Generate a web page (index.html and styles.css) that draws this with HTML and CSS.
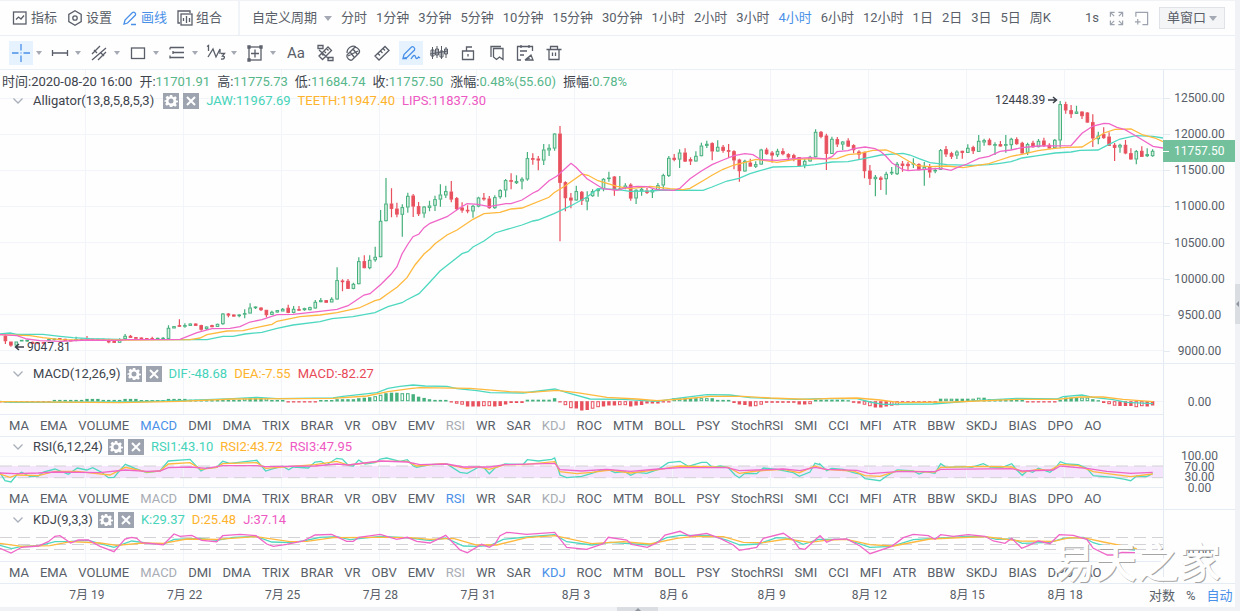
FILE: index.html
```html
<!DOCTYPE html>
<html lang="zh-CN">
<head>
<meta charset="utf-8">
<title>BTC 4小时</title>
<link rel="stylesheet" href="styles.css">
</head>
<body>
<svg class="defs" aria-hidden="true">
  <symbol id="gear" viewBox="0 0 16 16"><path fill="#fff" fill-rule="evenodd" d="M6.8 2h2.4l.4 1.8 1 .4 1.600-1 1.600 1.600-1 1.600.4 1 1.800.4v1.400l-1.800.4-.4 1 1 1.600-1.600 1.600-1.600-1-1 .4L9.200 14H6.800l-.4-1.800-1-.4-1.600 1-1.600-1.600 1-1.600-.4-1L1.500 9V7.500l1.700-.5.4-1-1-1.600 1.600-1.600 1.600 1 1-.4zM8 5.500a2.500 2.500 0 1 0 0 5 2.500 2.500 0 0 0 0-5z"/></symbol>
  <symbol id="close" viewBox="0 0 16 16"><path stroke="#fff" stroke-width="2" d="M4 4l8 8M12 4l-8 8"/></symbol>
  <symbol id="chevron" viewBox="0 0 10 6"><path fill="none" stroke="#a9afba" stroke-width="1.300" d="M.5.5L5 5 9.500.5"/></symbol>
</svg>
<div class="app">
  <header class="bar top">
    <div class="features">
      <button><svg viewBox="0 0 16 16"><rect x="1.500" y="2" width="12.500" height="12"/><path d="M4 9.500l2.500-2.500 2.500 2 3-3.500"/></svg>指标</button>
      <button><svg viewBox="0 0 16 16"><path d="M8 .8l6.200 3.600v7.200L8 15.200l-6.200-3.600V4.400z"/><circle cx="8" cy="8" r="2.200"/></svg>设置</button>
      <button class="on"><svg viewBox="0 0 16 16"><path d="M2 14l1-4 7.500-7.500c1.500-1.200 4 1 2.800 2.800L5.500 13zM9 14.500h5"/></svg>画线</button>
      <button><svg viewBox="0 0 16 16"><path d="M3 13H1V1h12v2"/><rect x="4" y="4" width="11" height="11"/><path d="M6.500 8v3M9.500 6v7M12.500 8v4"/></svg>组合</button>
    </div>
    <nav class="periods">
      <button class="custom">自定义周期<i class="caret"></i></button>
      <button>分时</button><button>1分钟</button><button>3分钟</button><button>5分钟</button><button>10分钟</button><button>15分钟</button><button>30分钟</button><button>1小时</button><button>2小时</button><button>3小时</button><button class="on">4小时</button><button>6小时</button><button>12小时</button><button>1日</button><button>2日</button><button>3日</button><button>5日</button><button>周K</button>
    </nav>
    <div class="window-tools">
      <button>1s</button>
      <button aria-label="全屏"><svg class="pale" viewBox="0 0 16 16"><path d="M1.500 6V1.500H6M1.500 1.500l4 4M10 1.500h4.500V6M14.500 1.500l-4 4M1.500 10v4.500H6M1.500 14.500l4-4M10 14.500h4.500V10M14.500 14.500l-4-4"/></svg></button>
      <button aria-label="新窗口"><svg class="pale" viewBox="0 0 16 16"><path d="M2 6V1.500h12.500v13H9M1 11.500h6M4 8.500v6"/></svg></button>
      <label class="picker"><select aria-label="窗口布局"><option>单窗口</option><option>双窗口</option></select><i class="caret"></i></label>
    </div>
  </header>
  <div class="bar draw">
    <div class="menus">
      <button aria-label="十字光标"><span class="tool on"><svg viewBox="0 0 20 20"><path d="M10 1v6.500M10 12.500V19M1 10h6.500M12.500 10H19M10 9.500v1"/></svg></span><i class="caret"></i></button>
      <button aria-label="线段"><span class="tool"><svg viewBox="0 0 20 20"><path d="M2.500 7v6M17.500 7v6M2.500 10h15"/></svg></span><i class="caret"></i></button>
      <button aria-label="通道"><span class="tool"><svg viewBox="0 0 20 20"><path d="M3 11L11 3M3 17L17 5M9 17l8-8M5 7l3 3M12 10l3 3"/></svg></span><i class="caret"></i></button>
      <button aria-label="矩形"><span class="tool"><svg viewBox="0 0 20 20"><rect x="3.500" y="5" width="13" height="10.500"/></svg></span><i class="caret"></i></button>
      <button aria-label="斐波那契"><span class="tool"><svg viewBox="0 0 20 20"><path d="M3 4.500h14M6 9.500h11M3 14.500h14M3 4.500v2M6 8v3M3 12.500v3"/></svg></span><i class="caret"></i></button>
      <button aria-label="波浪"><span class="tool"><svg viewBox="0 0 20 20"><path d="M1 3.500L2.500 2.500V8M2 14L7 6l3 8 4-8v5"/><path d="M15 10.500h3.500L16.500 13c3 0 2.500 3.500-1.500 3"/></svg></span><i class="caret"></i></button>
      <button aria-label="测量"><span class="tool"><svg viewBox="0 0 20 20"><rect x="4" y="4" width="12" height="13"/><path d="M10 6.500v8M6 10.500h8"/><path d="M3 3h2v2H3zM15 3h2v2h-2zM3 16h2v2H3z"/></svg></span><i class="caret"></i></button>
    </div>
    <div class="tools">
      <button class="tool text">Aa</button>
      <button class="tool" aria-label="标尺一"><svg viewBox="0 0 20 20"><path d="M3 2.500h5v3H3zM13 14.500h5v3h-5zM4 13l9-9 3.500 3.500-9 9zM6.500 10.500l2 2M9 8l2 2M11.500 5.500l2 2M4 7l10 9"/></svg></button>
      <button class="tool" aria-label="橡皮"><svg viewBox="0 0 20 20"><path d="M4 12l7-7c2-2 7 2 5 5l-7 7c-2 1-6-2-5-5zM7 9l4 5M10 6l4 5M5 13l10-5M4 10c0-6 6-8 9-6"/></svg></button>
      <button class="tool" aria-label="尺"><svg viewBox="0 0 20 20"><path d="M3 13L13 3.500 17 7.500 7 17zM6 10.500l2 2M8.500 8l2 2M11 5.500l2 2"/></svg></button>
      <button class="tool on" aria-label="画笔"><svg viewBox="0 0 20 20"><path d="M2 15.500l1-4L10.500 4c1.500-1 4 1 3 3L6 14.500zM2 15.500h4M10 16c3-5 4-4 4.500-2s2 2 3 0l1.500 1"/></svg></button>
      <button class="tool" aria-label="K线形态"><svg class="thin" viewBox="0 0 20 20"><path d="M3.500 4v12M8 3v12M12.500 3v13M17 4v11M2 7h3v6H2zM6.500 6h3v6h-3zM11 8h3v6h-3zM15.500 6h3v5h-3zM1 11L19 8"/></svg></button>
      <button class="tool" aria-label="锁定"><svg viewBox="0 0 20 20"><path d="M4.500 8h11v8.500h-11zM8.500 8V4h5.500M10 11v2.500"/></svg></button>
      <button class="tool" aria-label="书签"><svg viewBox="0 0 20 20"><path d="M6.500 5.500H16v11l-3.500-2.500-3 2.500-3-2.500zM4 14V3.500h10"/></svg></button>
      <button class="tool" aria-label="编辑"><svg viewBox="0 0 20 20"><path d="M6 17H2.500V3.500h15V8M6 2v3M14 2v3M5 8h7M5 12h4M10 17l6-5 2 5h-8M12 16l3-1"/></svg></button>
      <button class="tool" aria-label="删除"><svg viewBox="0 0 20 20"><path d="M2.500 6.500h15M5 6.500V16.500h10V6.500M6.500 6V3.500h7V6M8.500 9.500V13M11.500 9.500V13"/></svg></button>
    </div>
  </div>
  <section class="pane main">
    <div class="plot">
      <svg id="price" class="chart" viewBox="0 70 1163 293" preserveAspectRatio="none"></svg>
      <div class="legend">
        <p class="quote"><span>时间:2020-08-20 16:00</span><span>开:<b>11701.91</b></span><span>高:<b>11775.73</b></span><span>低:<b>11684.74</b></span><span>收:<b>11757.50</b></span><span>涨幅:<b>0.48%(55.60)</b></span><span>振幅:<b>0.78%</b></span></p>
        <p class="study"><svg class="fold"><use href="#chevron"/></svg><span class="name">Alligator(13,8,5,8,5,3)</span><button aria-label="设置"><svg><use href="#gear"/></svg></button><button aria-label="关闭"><svg><use href="#close"/></svg></button><span class="teal">JAW:11967.69</span><span class="amber">TEETH:11947.40</span><span class="pink">LIPS:11837.30</span></p>
      </div>
      <span class="mark high">12448.39 <svg viewBox="0 0 10 8"><path d="M0 4h8M5 1l3.500 3L5 7"/></svg></span>
      <span class="mark low"><svg viewBox="0 0 10 8"><path d="M10 4H2M5 1L1.500 4 5 7"/></svg> 9047.81</span>
    </div>
    <div class="axis"><span>12500.00</span><span>12000.00</span><span>11500.00</span><span>11000.00</span><span>10500.00</span><span>10000.00</span><span>9500.00</span><span>9000.00</span><output class="tag">11757.50</output></div>
  </section>
  <section class="pane">
    <div class="body">
      <div class="plot">
        <svg id="macd" class="chart" viewBox="0 364 1163 50" preserveAspectRatio="none"></svg>
        <div class="legend"><p class="study"><svg class="fold"><use href="#chevron"/></svg><span class="name">MACD(12,26,9)</span><button aria-label="设置"><svg><use href="#gear"/></svg></button><button aria-label="关闭"><svg><use href="#close"/></svg></button><span class="teal">DIF:-48.68</span><span class="amber">DEA:-7.55</span><span class="red">MACD:-82.27</span></p></div>
      </div>
      <nav class="tabs" data-active="MACD" data-used="RSI KDJ"></nav>
    </div>
    <div class="axis single"><span>0.00</span></div>
  </section>
  <section class="pane">
    <div class="body">
      <div class="plot">
        <svg id="rsi" class="chart" viewBox="0 437 1163 50" preserveAspectRatio="none"></svg>
        <div class="legend"><p class="study"><svg class="fold"><use href="#chevron"/></svg><span class="name">RSI(6,12,24)</span><button aria-label="设置"><svg><use href="#gear"/></svg></button><button aria-label="关闭"><svg><use href="#close"/></svg></button><span class="teal">RSI1:43.10</span><span class="amber">RSI2:43.72</span><span class="pink">RSI3:47.95</span></p></div>
      </div>
      <nav class="tabs" data-active="RSI" data-used="MACD KDJ"></nav>
    </div>
    <div class="axis dense"><span>100.00</span><span>70.00</span><span>30.00</span><span>0.00</span></div>
  </section>
  <section class="pane">
    <div class="body">
      <div class="plot tall">
        <svg id="kdj" class="chart" viewBox="0 510 1163 51" preserveAspectRatio="none"></svg>
        <div class="legend"><p class="study"><svg class="fold"><use href="#chevron"/></svg><span class="name">KDJ(9,3,3)</span><button aria-label="设置"><svg><use href="#gear"/></svg></button><button aria-label="关闭"><svg><use href="#close"/></svg></button><span class="teal">K:29.37</span><span class="amber">D:25.48</span><span class="pink">J:37.14</span></p></div>
      </div>
      <nav class="tabs" data-active="KDJ" data-used="MACD RSI"></nav>
    </div>
    <div class="axis single last"><span>0.00</span></div>
  </section>
  <footer class="time">
    <div class="dates"><span>7月 19</span><span>7月 22</span><span>7月 25</span><span>7月 28</span><span>7月 31</span><span>8月 3</span><span>8月 6</span><span>8月 9</span><span>8月 12</span><span>8月 15</span><span>8月 18</span></div>
    <div class="scale"><button>对数</button><button>%</button><button class="on">自动</button></div>
  </footer>
  <div class="watermark">易天之家</div>
  <button class="handle side" aria-label="展开侧栏"></button>
  <button class="handle bottom" aria-label="展开底栏"></button>
</div>
<script src="app.js"></script>
</body>
</html>
```

FILE: styles.css
```css
* { box-sizing: border-box; }
body {
  margin: 0;
  background: #f0f2f6;
  color: #595e69;
  font: 13px/16px Roboto, "Noto Sans CJK SC", sans-serif;
}
button {
  border: 0;
  padding: 0;
  background: none;
  color: inherit;
  font: inherit;
  white-space: nowrap;
}
svg { display: block; }
p { margin: 0; }
.defs { position: absolute; width: 0; height: 0; }
.app {
  position: relative;
  display: flex;
  flex-direction: column;
  min-height: 100vh;
  padding: 0 5px 4px 0;
}
.bar, .pane, .time { background: #fefefe; }
.bar { display: flex; align-items: center; border-bottom: 1px solid #e9eff5; }
.bar svg { fill: none; stroke: currentColor; stroke-width: 1.300; }
.bar .thin { stroke-width: 1; }
.on { color: #4a90e8; }
.caret {
  width: 0;
  height: 0;
  border: 4px solid transparent;
  border-top: 5px solid #a4a9b3;
  border-bottom: 0;
}

/* top toolbar */
.top { height: 36px; border-top: 1px solid #f0f2f6; }
.features {
  display: flex;
  align-items: center;
  gap: 10px;
  width: 240px;
  height: 34px;
  padding-left: 12px;
  border-right: 2px solid #f0f3f8;
}
.features button { display: flex; align-items: center; gap: 3px; }
.features svg { width: 16px; height: 16px; }
.periods {
  display: flex;
  flex: 1;
  align-items: center;
  justify-content: space-between;
  padding-left: 12px;
}
.custom { display: flex; align-items: center; gap: 7px; }
.window-tools { display: flex; align-items: center; gap: 10px; padding: 0 10px 0 34px; }
.window-tools svg { width: 15px; height: 15px; }
.pale { color: #9da3ae; }
.picker { position: relative; display: block; }
.picker select {
  display: block;
  width: 66px;
  height: 22px;
  padding: 0 0 0 7px;
  border: 1px solid #dfe2e6;
  border-radius: 0;
  background: #f4f5f6;
  color: inherit;
  font: inherit;
  appearance: none;
}
.picker .caret { position: absolute; right: 8px; top: 9px; pointer-events: none; }

/* drawing toolbar */
.draw { height: 34px; padding-left: 9px; }
.menus { display: flex; gap: 0; }
.menus button { display: flex; align-items: center; width: 39px; }
.menus .caret { margin-left: 3px; border-width: 4px 3px 0; }
.tool { display: flex; align-items: center; justify-content: center; width: 24px; height: 24px; }
.tool svg { width: 20px; height: 20px; }
.tool.on { background: #e6f3fe; }
.tool.text { font-size: 15px; }
.tools { display: flex; justify-content: space-between; width: 282px; margin-left: 2px; }

/* chart panes */
.pane { display: grid; grid-template-columns: minmax(0, 1fr) 72px; border-top: 1px solid #e6ecf3; }
.pane.main { flex: 1; min-height: 293px; border-top: 0; }
.plot { position: relative; height: 50px; }
.plot.tall { height: 51px; }
.main .plot { height: auto; }
.chart { position: absolute; inset: 0; width: 100%; height: 100%; }
.legend { position: relative; padding-top: 2px; color: #40444d; white-space: nowrap; }
.quote { display: flex; gap: 7px; padding: 2px 0 3px 2px; }
.quote b { color: #57b68a; font-weight: 400; }
.study { display: flex; align-items: center; }
.fold { width: 10px; height: 6px; margin: 0 10px 0 13px; }
.study button { width: 16px; height: 16px; margin-right: 4px; background: #9da4b0; }
.study button svg { width: 16px; height: 16px; }
.name { margin-right: 5px; }
.main .name { margin-right: 9px; }
.study button + span { margin-left: 3px; }
.study span + span { margin-left: 7px; }
.teal { color: #45d3b9; }
.amber { color: #ffb32c; }
.pink { color: #ee58c2; }
.red { color: #e84a58; }
.mark { position: absolute; display: flex; align-items: center; gap: 3px; color: #3c4049; font-size: 12px; line-height: 14px; }
.mark svg { width: 10px; height: 8px; fill: none; stroke: currentColor; stroke-width: 1.500; }
.mark.high { right: 9%; top: 8%; }
.mark.low { left: 14px; top: 92%; }
.tabs {
  display: flex;
  gap: 11px;
  height: 22px;
  padding-left: 9px;
  border-top: 1px solid #e6ecf3;
  overflow: hidden;
}
.tabs .used { color: #a8acb4; }
.axis {
  position: relative;
  display: flex;
  flex-direction: column;
  justify-content: space-between;
  align-items: center;
  border-left: 1px solid #e4eaf1;
  font-size: 12px;
  line-height: 14px;
}
.main .axis { padding: 21px 0 5px; }
.main .axis span::before {
  position: absolute;
  left: 0;
  width: 6px;
  height: 1px;
  margin-top: 7px;
  background: #e4eaf1;
  content: "";
}
.axis .tag {
  position: absolute;
  left: -1px;
  right: 0;
  top: 24%;
  padding-left: 11px;
  background: #72c19c;
  color: #fff;
  line-height: 22px;
}
.tag::before { position: absolute; left: 0; top: 11px; width: 6px; height: 1px; background: #fff; content: ""; }
.single { padding-top: 31px; }
.single.last { padding-top: 37px; }
.dense { padding: 14px 0 16px; line-height: 10px; }

/* time axis */
.time { display: grid; grid-template-columns: minmax(0, 1fr) 92px; height: 24px; border-top: 1px solid #e6ecf3; line-height: 22px; }
.dates { display: grid; grid-template-columns: repeat(11, 1fr); padding: 0 29px 0 38px; font-size: 12px; text-align: center; }
.scale { display: flex; align-items: center; gap: 11px; padding-left: 6px; }

.watermark {
  position: absolute;
  right: 19px;
  bottom: 28px;
  color: #fff;
  font: 500 42px/46px "Noto Sans CJK SC", sans-serif;
  text-shadow: 1px 1px 0 #a5a5a5;
}
.handle { position: absolute; background: #dadde2; }
.handle::before { display: block; width: 0; height: 0; margin: auto; border: 3px solid transparent; content: ""; }
.handle.side { right: 0; top: 284px; width: 5px; height: 40px; }
.handle.side::before { border-right-color: #8f959f; border-left: 0; }
.handle.bottom { bottom: 0; left: 50%; width: 41px; height: 4px; margin-left: -3px; }
.handle.bottom::before { border-bottom-color: #8f959f; border-top: 0; }
```

FILE: app.js
```js
const TEAL = '#4fd8c0', AMBER = '#ffb93e', PINK = '#f066c8', UP = '#45b07c', DOWN = '#e8505e';
const STEP = 5.437;
const GRID_X = Array.from({ length: 11 }, (_, i) => 86 + i * 97.87);
const r = (n) => Math.round(n * 10) / 10;
const hline = (y, color = '#f1f5f9') => `<path d="M0 ${y}H1163" stroke="${color}"/>`;
const dash = (y) => `<path d="M0 ${y}H1163" stroke="#d3d2d6" stroke-dasharray="12 6"/>`;
const vgrid = (top, bottom) => GRID_X.map((x) => `<path d="M${Math.round(x) - 0.5} ${top}V${bottom}" stroke="#f1f5f9"/>`).join('');
const line = (points, color) => `<polyline fill="none" stroke="${color}" stroke-width="1.300" points="${points}"/>`;

// Samples are stored in thirds of a chart unit, relative to each block's origin.
function trace(oy, color, blocks) {
  const points = Object.entries(blocks).flatMap(([ox, text]) => text.trim().split(/\s+/).map((pair) => {
    const [x, y] = pair.split(',').map(Number);
    return `${r(+ox + x / 3)},${r(oy + y / 3)}`;
  }));
  return line(points.join(' '), color);
}

// Candles: direction, high, body top, body bottom, low; first index and vertical origin per block.
const CANDLES = [
  [1, 230, `r 315 318 333 342;r 335 335 346 350;g 335 335 346 348;g 330 330 334 334;g 330 330 334 336;r 335 336 341 342;r 337 338 342 342;r 336 337 340 341;g 327 328 331 331;g 325 326 330 331;r 324 325 329 329;r 326 327 332 333;r 330 330 334 334;g 320 328 332 334;g 326 327 330 330;r 318 326 330 330;r 326 326 330 330;g 326 327 330 330;g 326 327 330 330;r 326 330 337 340;r 332 333 338 339;g 325 328 338 338;g 312 318 327 328;r 315 318 323 323;r 321 322 326 326;r 322 323 327 328;r 324 325 328 328;r 320 325 328 328;g 323 324 328 328;g 321 324 328 328;g 286 294 326 328;g 288 289 295 295;r 268 286 290 291;g 280 286 290 293;g 280 281 287 287;r 280 281 287 287;r 284 286 299 302;g 289 290 297 299;r 284 286 291 292;g 281 282 290 290;g 249 251 282 284;r 249 251 256 262;r 253 254 259 260;g 252 254 258 262;g 238 250 253 265;g 220 233 250 250;g 229 230 234 237;r 232 233 240 243;r 240 240 255 262;g 242 246 254 254;g 240 241 247 248;g 234 237 244 244;r 224 234 248 250;g 228 237 248 250;r 228 238 241 242;g 233 235 240 242;g 230 232 240 241;g 210 216 235 236;g 204 211 216 217;r 210 211 218 219;g 202 207 217 217;g 112 151 208 209;r 148 152 156 184;r 147 153 176 177;g 158 162 176 178;g 82 94 162 163;r 76 94 114 115;g 76 90 114 118;g 50 81 90 95`],
  [70, 110, `g 300 333 441 442;g 204 281 333 334;r 235 281 296 322;r 278 296 313 322;g 283 292 314 380;g 248 258 292 308;r 252 257 289 321;r 276 289 312 318;g 288 290 310 323;g 272 287 293 304;g 257 268 287 303;g 223 254 268 290;g 227 244 256 264;r 213 245 268 277;r 261 265 297 301;r 277 293 301 308;r 286 300 303 310;g 285 288 304 323;g 260 263 289 292;r 249 264 268 272;r 258 266 294 296;g 256 262 294 296;g 238 241 261 266;g 207 211 241 262;r 190 211 215 238;g 196 214 219 222;g 202 207 214 238;g 126 145 208 212;r 130 145 149 164;r 138 146 151 181;g 102 119 151 165;g 103 114 121 138;g 70 71 115 122;r 48 71 218 394;r 214 217 264 304;r 249 263 271 295;g 227 244 271 272;r 243 246 272 285;g 244 263 274 301;g 238 244 258 260;g 235 237 243 260;g 205 207 236 244;g 185 203 206 215;r 198 200 240 257;g 198 236 240 241;g 220 227 234 238;r 220 224 265 272;g 238 240 265 282;g 228 237 243 257;r 233 242 248 252;g 237 240 247 264;g 219 226 240 241;g 191 196 226 238;g 138 144 197 201;r 132 144 149 154;g 118 128 148 174;r 115 128 154 156;r 142 148 154 165;g 124 138 154 155;g 98 107 138 139;g 92 102 107 114;r 97 100 124 151;g 91 111 124 125;r 105 111 122 128;r 102 121 125 143;r 121 124 151 178;r 146 149 183 215;g 149 153 184 185;r 146 158 169 170;g 154 163 170 174`],
  [140, 85, `g 191 194 238 239;r 188 194 207 209;r 198 203 211 233;g 191 198 210 216;r 190 199 207 211;r 205 208 217 224;r 206 211 219 229;r 216 217 243 244;g 222 228 241 250;g 212 216 229 230;g 133 141 216 217;r 138 141 155 160;r 146 152 206 255;g 155 162 206 207;r 156 163 178 186;g 168 170 178 195;r 160 167 184 186;r 178 181 195 205;r 196 200 208 222;r 200 201 258 280;r 240 257 281 300;g 270 276 282 334;r 274 278 284 315;g 260 267 282 329;g 246 261 265 270;g 231 237 267 270;r 228 236 242 260;r 230 237 243 258;g 220 235 238 249;r 235 238 255 256;g 231 246 254 302;r 237 247 262 278;g 248 255 259 265;g 192 196 254 255;r 183 193 208 216;r 200 205 215 222;g 196 200 211 222;r 197 198 203 221;g 178 189 203 204;r 182 187 198 207;g 150 168 200 201;g 161 166 172 182;r 160 165 180 181;g 172 178 182 210;r 168 178 184 185;g 150 178 182 203;g 158 162 180 194;r 157 163 177 179;r 170 174 205 206;g 173 178 203 210;r 167 174 186 188;g 162 168 186 187;r 158 167 182 186;r 175 180 190 191;g 162 165 189 190;g 48 58 166 190;r 50 58 76 86;r 60 76 87 99;g 62 80 86 87;r 79 80 93 102;r 81 83 112 113;r 88 112 160 186;g 140 152 162 178;r 127 148 159 161;r 142 155 182 183;r 174 180 188 228;g 176 180 187 203;r 165 180 205 208;r 190 205 223 224;g 195 199 223 238;r 184 198 215 216;g 190 208 213 216;g 193 198 213 215`]
];

function candles() {
  return CANDLES.map(([first, oy, rows]) => rows.split(';').map((row, k) => {
    const [dir, ...v] = row.split(' ');
    const [high, top, bottom, low] = v.map((n) => oy + n / 3);
    const x = (first + k) * STEP;
    const color = dir === 'g' ? UP : DOWN;
    const height = Math.max(bottom - top - 0.6, 0.6);
    return `<path d="M${r(x)} ${r(high)}V${r(top)}M${r(x)} ${r(bottom)}V${r(low)}" stroke="${color}" stroke-width="1.200"/>` +
      `<rect x="${r(x - 1.3)}" y="${r(top + 0.3)}" width="2.600" height="${r(height)}" stroke="${color}" fill="${dir === 'g' ? '#d8f0e4' : DOWN}"/>`;
  }).join('')).join('');
}

const price = document.getElementById('price');
price.innerHTML = vgrid(70, 363) +
  [98.5, 134.5, 170.5, 206.5, 242.5, 278.5, 314.5, 350.5].map((y) => hline(y)).join('') + candles() +
  line('0,334 10,333 17,334.300 43,334.300 60,336.300 73,337.700 90,338.700 127,339.700 207,339.700 223,336.300 233,336.300 245,334 262,332.300 277,328.300 293,325 320,321.700 332,318.700 353,316.700 375,312.700 388,306.700 402,302.700 407,299.700 419,293.700 430,282 440,271 462,253.700 468,251.700 473,247 484,241 495,233 506,229.700 522,225 533,221 538,220 554,213.700 571,205.700 587,197 598,188.700 617,189.300 630,191.300 650,191 663,190 703,190.300 712,187 727,181 739,178.300 750,173.700 760,170.700 773,167 799,166.300 815,164.700 832,162 848,161.700 864,158.700 881,155 903,153.300 910,155 919,158.700 930,162.700 947,164.700 973,165.300 989,164.700 1000,163.300 1011,161.700 1022,158 1038,155.700 1055,153 1071,152 1080,150.300 1098,150 1109,144.300 1120,139 1136,135.700 1153,136.300 1163,138', TEAL) +
  line('0,334.700 30,335.700 43,337.700 60,339.700 127,340 190,339.700 200,338 207,334.700 227,331 243,330.700 262,326.300 272,324.300 277,321.300 300,316.700 320,315 337,312.700 359,308 375,300.700 380,299.300 387,294.300 397,287.300 407,277.700 415,265 424,254 430,249 435,243.700 447,235 457,230 473,219.300 484,213.700 500,212.300 511,209 522,208 549,197.300 554,192.700 565,186 582,174 588,175.300 598,180.700 617,186.300 630,188.700 650,186.300 670,188.700 683,189.700 690,188.300 703,180.700 712,175.300 723,169.300 734,165 745,162.300 756,159.300 777,162.300 797,159 837,158.700 848,154.700 859,153.700 873,150.300 886,150 897,154.300 908,160.700 917,165.700 930,166.700 947,166 963,167.700 989,163.700 1000,160 1011,156.300 1022,154.300 1038,150.700 1055,148.300 1066,147.300 1082,147 1093,140.300 1104,133 1115,129.300 1131,129 1143,135 1155,138 1163,141.700', AMBER) +
  line('0,334.700 17,335.700 27,339 40,340.700 60,341.300 87,340 118,340.300 127,339.700 180,339.300 197,332.700 212,328.700 230,328.300 240,326.700 250,322 262,319.700 277,314.700 293,314.300 320,311.300 337,309.300 348,305.700 354,301.700 364,295 370,293.700 381,284.300 391,274.300 397,266.700 402,254 408,244 413,236.700 419,234 424,227.700 430,223.300 447,216.700 460,207.700 467,203.700 478,204.300 489,206.700 506,203.700 511,203.700 522,200 533,193 538,190.700 549,180.700 557,176 571,163.300 576,167.300 587,178.700 597,185 603,188.700 617,190.300 627,187.300 637,186.300 647,186.700 657,189.700 674,190.300 680,188.300 690,178.700 701,171.300 712,164.700 723,160 734,155.700 745,153.700 753,154.700 761,159.700 777,160.300 797,158.300 810,157.700 826,159 832,156.700 837,151.700 848,150.700 854,148.700 865,147 875,148.700 881,151.700 886,156.300 892,163 903,169.700 908,170.700 930,169 941,168.300 951,170.300 957,167.700 967,164 979,158.300 989,156.300 1000,151.300 1011,150 1022,147.700 1038,146 1071,145.700 1076,140 1082,133.300 1093,126 1104,123.300 1109,123.700 1117,127.300 1125,129.700 1136,136 1143,140.300 1153,146.300 1163,148', PINK);

// Histogram as runs of [length, height]; a negative height hangs below zero.
const HIST = [[8, -1], [2, -1.5], [6, 1.3], [3, 2.3], [4, 1.3], [3, 2.3], [5, 1.2], [4, 2.3], [10, 1.5], [5, 3], [3, 1.2], [6, -1], [3, 1.2], [4, 2], [1, 3], [1, 3.5], [1, 4], [1, 5], [1, 6.5], [1, 8], [2, 8.5], [2, 8], [1, 7], [1, 4.5], [1, 3.3], [1, 2], [3, 1.3], [1, -1], [1, -2.5], [1, -3.5], [6, -5], [1, -4.5], [1, -3], [3, -1.5], [5, 1.5], [1, 3], [1, -1], [1, -4], [2, -7], [1, -9], [1, -8.5], [1, -7.5], [1, -6], [1, -5], [4, -4], [1, -5], [1, -4], [1, -3.5], [3, -2], [2, -1], [8, 3], [3, 1.3], [1, -1.5], [1, -3], [1, -3.5], [2, -5], [1, -3.5], [6, -1.3], [3, -3], [6, 1.5], [1, 1], [1, -1.3], [1, -2], [1, -3.5], [1, -5], [2, -6], [1, -5], [1, -4.5], [1, -4], [7, -1.3], [7, 2.5], [2, 3.5], [7, 2], [6, -1], [1, 1.5], [5, 3.7], [1, 2], [1, 1], [1, -1.5], [1, -3], [4, -4.5], [1, -6], [2, -5], [1, -4]];
let bar = 0;
const histogram = HIST.flatMap(([count, h]) => Array.from({ length: count }, () => {
  const x = STEP * bar++;
  const size = Math.abs(h);
  const top = h > 0 ? 401.2 - size : 401.2;
  const color = h > 0 ? UP : DOWN;
  if (size > 2.4 && bar % 5 < 2) {
    return `<rect x="${r(x - 1.3)}" y="${r(top + 0.5)}" width="2.600" height="${r(size - 1)}" fill="#fff" stroke="${color}"/>`;
  }
  return `<rect x="${r(x - 1.7)}" y="${r(top)}" width="3.400" height="${r(size + 0.3)}" fill="${color}"/>`;
})).join('');
document.getElementById('macd').innerHTML = vgrid(364, 414) + hline(401.5) + histogram +
  line('0,401.300 10,402.300 127,402 180,400.700 233,398.700 257,397.300 277,398.700 333,398 343,396.300 377,392.700 388,388.300 400,386.300 413,385 425,386 447,386.300 457,388.700 477,390.700 490,392.700 523,393 555,389 567,392.700 590,399 623,399.300 657,401.300 677,398.300 707,394.700 730,395 750,397.700 797,399.300 820,398.700 857,398.700 870,402 883,404.300 933,404 980,400.300 1017,398.300 1057,399 1063,396.700 1082,395 1093,397.300 1113,399.700 1127,402.300 1153,403.700', TEAL) +
  line('0,401.700 120,402.700 180,401.300 233,399 333,398.300 367,396 388,391.700 410,388.700 420,387.700 470,388.300 510,391.700 530,392.300 557,390.300 577,392.700 607,397.300 637,399 657,400.700 683,399 710,396.300 743,396.300 770,398 810,399.300 830,398.300 857,398 880,400 900,402.700 953,402 1020,399.300 1057,399.300 1080,397 1103,397 1123,399.300 1153,401.700', AMBER);

document.getElementById('rsi').innerHTML = '<rect y="466" width="1163" height="12" fill="#f4e5fc"/>' + vgrid(437, 487) + hline(456.5) + dash(466) + dash(477.700) +
  trace(360, TEAL, {
    0: '0,338 15,362 33,366 50,345 65,337 90,350 115,348 130,336 165,327 205,343 232,324 260,330 278,323 305,337 325,353 342,352 358,333 376,313 405,325 440,338 480,333 505,303 570,298 603,333 620,324 650,322 668,304 690,310 770,301 797,333 820,326 848,319 866,329 880,321 925,324 945,306 963,304 980,314 1010,295 1027,297 1045,316 1060,318 1076,300 1095,312 1125,308 1141,297 1160,294 1200,304 1222,299 1240,318',
    410: '20,322 60,314 110,312 150,337 172,340 205,322 222,323 238,341 255,324 285,312 340,313 352,299 385,303 425,298 434,294 450,345 470,353 515,349 545,340 575,330 600,331 615,338 645,335 662,346 680,337 710,340 745,328 775,308 810,304 835,319 875,307 890,307 907,322 930,318 955,323 975,345 988,353 1005,340 1040,341 1060,324 1100,328 1150,338 1168,349 1200,336 1215,310 1230,314',
    820: '0,312 20,332 35,325 70,328 100,338 120,342 135,356 180,362 200,348 232,330 280,333 297,342 315,335 345,340 362,311 378,322 430,320 455,322 490,311 510,321 545,323 575,311 590,330 607,346 622,332 638,337 655,325 690,337 705,325 721,305 740,312 775,314 800,325 820,347 880,352 915,358 932,362 950,348 980,350 998,341'
  }) +
  trace(360, AMBER, {
    0: '0,342 30,352 50,345 115,347 165,334 230,334 330,345 376,322 440,336 480,333 505,312 570,308 603,328 650,322 668,311 770,308 797,325 945,314 1010,304 1045,315 1141,304 1222,304',
    410: '20,318 100,311 170,326 205,320 238,328 285,314 340,314 434,305 450,335 500,341 545,337 600,330 662,339 745,329 810,318 955,322 988,340 1040,333 1120,328 1168,338 1215,318',
    820: '15,328 100,333 135,347 180,349 232,333 345,336 362,322 490,319 575,321 607,336 655,328 690,331 721,313 775,317 820,335 880,343 932,350 998,342'
  }) +
  trace(360, PINK, {
    0: '0,339 45,341 115,339 165,336 300,338 376,330 440,334 480,333 505,323 570,321 620,325 668,317 770,317 797,320 945,318 1010,312 1045,315 1141,303 1222,306',
    410: '30,314 110,312 160,321 240,321 285,314 434,310 450,329 515,333 590,328 662,334 745,327 810,323 950,323 988,332 1120,327 1170,332 1215,322',
    820: '20,328 110,331 150,341 232,335 345,335 362,328 575,326 607,333 700,330 721,318 800,325 860,334 932,340 998,337'
  });

document.getElementById('kdj').innerHTML = vgrid(510, 561) + hline(553.500) + dash(537.500) + dash(544.500) + dash(549.500) +
  trace(485, TEAL, {
    0: '0,181 35,191 65,184 120,182 165,170 212,169 265,166 342,187 395,168 450,175 490,178 522,163 600,160 650,166 700,157 768,154 815,171 870,173 910,168 960,157 1010,155 1050,164 1141,154 1230,159',
    410: '60,167 107,159 160,183 200,184 240,182 280,163 350,156 434,149 470,170 545,180 600,172 720,180 770,158 810,151 900,151 950,165 990,180 1045,177 1100,158 1140,160 1180,178 1225,163',
    820: '80,163 150,187 215,184 280,164 440,154 495,155 530,163 575,162 607,175 690,172 730,160 790,157 820,173 870,188 945,195'
  }) +
  trace(485, AMBER, {
    0: '0,175 65,184 150,182 212,170 300,174 350,181 430,174 490,175 560,162 650,163 768,155 870,170 920,169 1000,158 1141,157 1230,158',
    410: '60,163 130,160 200,180 260,180 350,158 434,152 545,176 640,170 720,177 800,160 850,154 940,155 1000,172 1060,173 1130,162 1200,172',
    820: '15,166 80,163 150,179 220,183 330,162 495,155 600,168 700,169 750,158 800,160 850,171 950,191'
  }) +
  trace(485, PINK, {
    0: '0,190 33,204 65,187 115,183 145,170 165,154 180,152 212,174 235,165 265,165 300,184 342,200 375,162 395,157 410,160 425,173 490,179 522,147 540,154 575,151 605,166 650,170 668,152 720,148 768,152 800,177 820,184 860,178 910,168 945,150 995,148 1040,169 1060,169 1076,157 1141,148 1190,163 1222,157',
    410: '20,169 60,174 107,151 150,195 172,203 215,178 238,187 255,177 270,152 290,142 350,148 434,142 470,187 530,193 580,176 595,157 650,165 665,178 712,187 745,172 765,150 810,139 840,153 890,145 930,160 970,180 988,196 1040,187 1060,160 1120,145 1150,165 1168,190 1185,193 1215,165',
    820: '0,152 20,172 40,163 80,162 120,183 150,206 215,184 250,158 280,148 325,152 345,163 362,149 400,154 445,149 495,154 520,168 555,175 575,160 605,190 625,182 655,168 690,176 718,149 760,151 800,163 820,190 862,210 880,210 905,202 945,203'
  });

const STUDIES = 'MA EMA VOLUME MACD DMI DMA TRIX BRAR VR OBV EMV RSI WR SAR KDJ ROC MTM BOLL PSY StochRSI SMI CCI MFI ATR BBW SKDJ BIAS DPO AO'.split(' ');
document.querySelectorAll('.tabs').forEach((nav) => {
  const used = nav.dataset.used.split(' ');
  STUDIES.forEach((name) => {
    const tab = document.createElement('button');
    tab.textContent = name;
    if (name === nav.dataset.active) tab.className = 'on';
    if (used.includes(name)) tab.className = 'used';
    nav.append(tab);
  });
});
```
